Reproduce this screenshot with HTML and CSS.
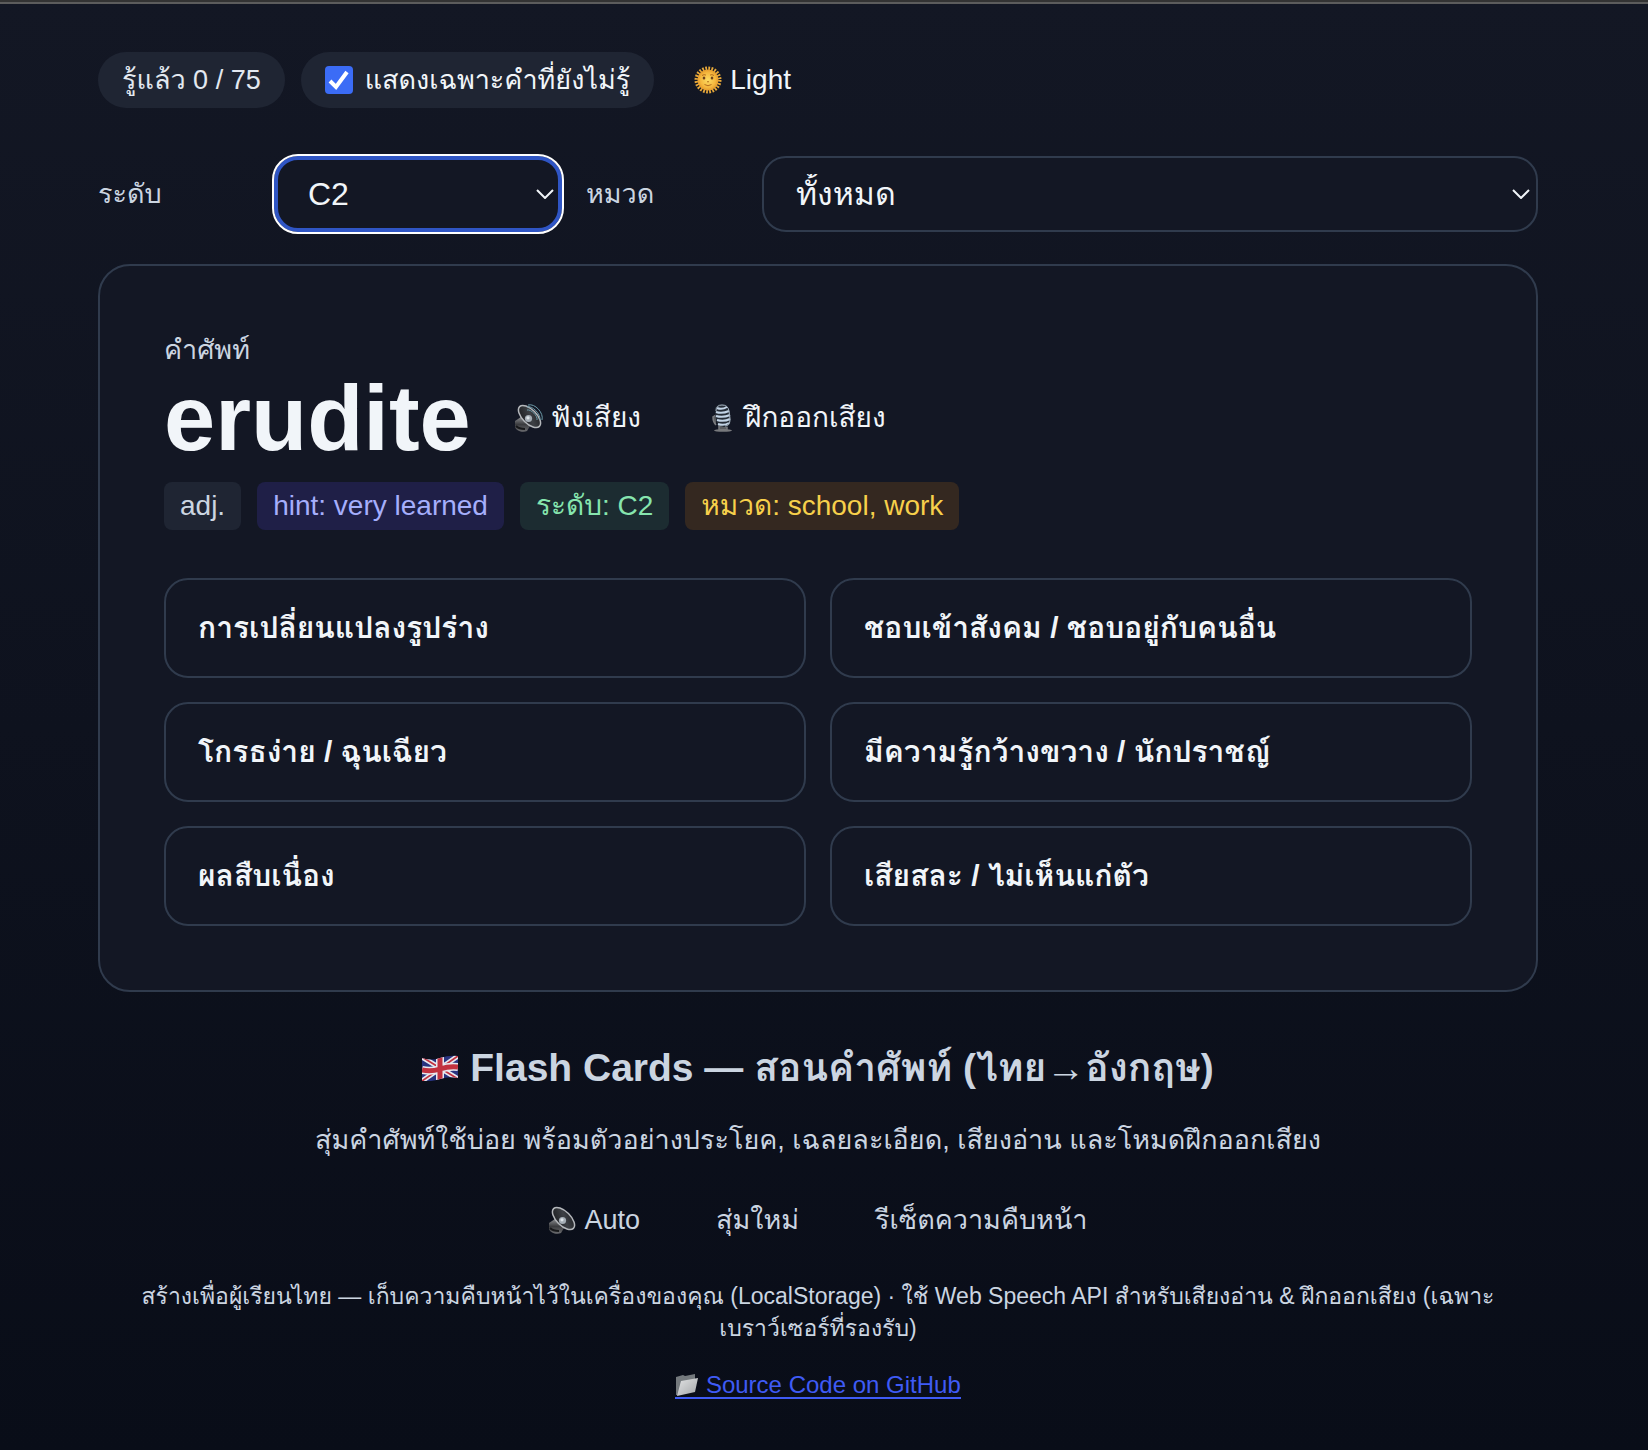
FILE: index.html
```
<!DOCTYPE html>
<html lang="th">
<head>
<meta charset="utf-8">
<meta name="viewport" content="width=device-width, initial-scale=1">
<title>Flash Cards</title>
<link rel="stylesheet" href="styles.css">
</head>
<body>
<svg class="defs" width="0" height="0" aria-hidden="true">
  <defs>
    <linearGradient id="cone" x1="0" y1="0" x2="1" y2="1"><stop offset="0" stop-color="#17181b"/><stop offset=".55" stop-color="#3d4045"/><stop offset="1" stop-color="#1d1e21"/></linearGradient>
    <linearGradient id="body" x1="0" y1="0" x2="0" y2="1"><stop offset="0" stop-color="#8b8d90"/><stop offset=".5" stop-color="#3a3b3e"/><stop offset="1" stop-color="#6c6d70"/></linearGradient>
    <radialGradient id="sun"><stop offset="0" stop-color="#fcdc63"/><stop offset=".7" stop-color="#f5b83e"/><stop offset="1" stop-color="#e59a2c"/></radialGradient>
    <linearGradient id="folder" x1="0" y1="0" x2="1" y2="1"><stop offset="0" stop-color="#e2e3e4"/><stop offset="1" stop-color="#a3a6a9"/></linearGradient>
    <symbol id="speaker" viewBox="0 0 28 28">
      <path d="M0 17l6-4 9 9-3 5c-4 2-11 0-12-4z" fill="url(#body)"/>
      <path d="M1 22c2 2 5 3 9 3" stroke="#17181a" stroke-width="2" fill="none"/>
      <ellipse cx="14.500" cy="12.500" rx="7" ry="14" transform="rotate(-45 14.500 12.500)" fill="url(#cone)" stroke="#b4b7bb" stroke-width="1.500"/>
      <circle cx="13.500" cy="14.500" r="3.600" fill="#a4adb5"/><circle cx="13" cy="13.800" r="1.600" fill="#dce3e8"/>
    </symbol>
    <symbol id="waves" viewBox="0 0 28 28">
      <g fill="none" stroke="#6c9aa8" stroke-width="1"><path d="M12 6c4-1 11 6 10 10"/><path d="M12 3c5-2 14 7 13 13"/><path d="M13 1c7-2 16 8 14 15"/></g>
    </symbol>
  </defs>
</svg>
<main class="page">
  <div class="toolbar">
    <span class="pill">รู้แล้ว 0 / 75</span>
    <label class="pill pill-check"><input type="checkbox" class="check" checked><span>แสดงเฉพาะคำที่ยังไม่รู้</span></label>
    <button type="button" class="ghost">
      <svg class="icon" viewBox="0 0 28 28" aria-hidden="true">
        <circle cx="14" cy="14" r="11.500" fill="none" stroke="#e8a93a" stroke-width="4" stroke-dasharray="1.700 1.310"/>
        <circle cx="14" cy="14" r="10.500" fill="url(#sun)"/>
        <g fill="#6d421b"><ellipse cx="10" cy="12" rx="1.300" ry="1.600"/><ellipse cx="18" cy="12" rx="1.300" ry="1.600"/></g>
        <path d="M8 9.500q2-1.500 4-.4M16 9.100q2-1.100 4 .4M13 15.500q1 1 2 0M10.500 18.500q3.500 2.500 7 0" fill="none" stroke="#b56d1e" stroke-width="1"/>
      </svg>
      <span>Light</span>
    </button>
  </div>

  <div class="filters">
    <label for="level">ระดับ</label>
    <div class="select-wrap">
      <select id="level" class="select select-active"><option>C2</option></select>
      <svg class="chevron" viewBox="0 0 18 10" aria-hidden="true"><path d="M1 1l8 8 8-8"/></svg>
    </div>
    <label for="category">หมวด</label>
    <div class="select-wrap">
      <select id="category" class="select"><option>ทั้งหมด</option></select>
      <svg class="chevron" viewBox="0 0 18 10" aria-hidden="true"><path d="M1 1l8 8 8-8"/></svg>
    </div>
  </div>

  <section class="card">
    <div class="card-label">คำศัพท์</div>
    <div class="word-row">
      <h1 class="word">erudite</h1>
      <button type="button" class="ghost">
        <svg class="icon" viewBox="0 0 28 28" aria-hidden="true"><use href="#speaker"/><use href="#waves"/></svg>
        <span>ฟังเสียง</span>
      </button>
      <button type="button" class="ghost">
        <svg class="icon" viewBox="-2 0 28 28" aria-hidden="true">
          <path d="M5 21q-3-3-3-8l3-2M8 21l8 2v3H8z" fill="#5b5d61" stroke="#797b7f" stroke-width="1.500"/>
          <ellipse cx="12" cy="26.400" rx="9" ry="1.400" fill="#77797c"/>
          <path d="M4 8C3 3 6 0 11 0s7 3 8 8l1 7c0 5-2 8-6 8s-8-2-9-7z" fill="#252c36"/>
          <path d="M5 8q6 2 13-1M5 12q7 2 14-1M6 16q7 2 13-1M7 20q6 2 11-1M6 4q5 2 10-1" fill="none" stroke="#c3d4e6" stroke-width="2"/>
          <path d="M5 7q0-6 6-6t7 6l1 8q0 7-5 7" fill="none" stroke="#a4b1c0" stroke-width="1"/>
        </svg>
        <span>ฝึกออกเสียง</span>
      </button>
    </div>
    <div class="tags">
      <span class="tag">adj.</span>
      <span class="tag tag-hint">hint: very learned</span>
      <span class="tag tag-level">ระดับ: C2</span>
      <span class="tag tag-category">หมวด: school, work</span>
    </div>
    <div class="choices">
      <button type="button" class="choice">การเปลี่ยนแปลงรูปร่าง</button>
      <button type="button" class="choice">ชอบเข้าสังคม / ชอบอยู่กับคนอื่น</button>
      <button type="button" class="choice">โกรธง่าย / ฉุนเฉียว</button>
      <button type="button" class="choice">มีความรู้กว้างขวาง / นักปราชญ์</button>
      <button type="button" class="choice">ผลสืบเนื่อง</button>
      <button type="button" class="choice">เสียสละ / ไม่เห็นแก่ตัว</button>
    </div>
  </section>

  <footer class="footer">
    <h2 class="title">
      <svg class="flag" viewBox="0 0 36 26" aria-hidden="true">
        <clipPath id="wave"><path d="M0 3Q9 6 18 3T36 1V23Q27 21 18 24T0 26z"/></clipPath>
        <g clip-path="url(#wave)">
          <path d="M0 0h36v26H0z" fill="#28337f"/>
          <path d="M0 2l36 22M0 26L36 1" stroke="#e6e8ef" stroke-width="5"/>
          <path d="M0 2l36 22M0 26L36 1" stroke="#c2313f" stroke-width="1.800"/>
          <path d="M18 0v26M0 15Q9 17 18 14T36 12" fill="none" stroke="#e6e8ef" stroke-width="8"/>
          <path d="M18 0v26M0 15Q9 17 18 14T36 12" fill="none" stroke="#c2313f" stroke-width="5"/>
        </g>
      </svg>
      <span>Flash Cards — สอนคำศัพท์ (ไทย→อังกฤษ)</span>
    </h2>
    <p class="subtitle">สุ่มคำศัพท์ใช้บ่อย พร้อมตัวอย่างประโยค, เฉลยละเอียด, เสียงอ่าน และโหมดฝึกออกเสียง</p>
    <div class="actions">
      <button type="button" class="ghost">
        <svg class="icon" viewBox="0 0 28 28" aria-hidden="true"><use href="#speaker"/></svg>
        <span>Auto</span>
      </button>
      <button type="button" class="ghost">สุ่มใหม่</button>
      <button type="button" class="ghost">รีเซ็ตความคืบหน้า</button>
    </div>
    <p class="note">สร้างเพื่อผู้เรียนไทย — เก็บความคืบหน้าไว้ในเครื่องของคุณ (LocalStorage) · ใช้ Web Speech API สำหรับเสียงอ่าน &amp; ฝึกออกเสียง (เฉพาะเบราว์เซอร์ที่รองรับ)</p>
    <a class="source" href="#source"><svg class="icon-small" viewBox="0 0 24 24" aria-hidden="true"><path d="M1 4l7-2 2 1 10-2v6L3 22H1z" fill="#74797d"/><path d="M6 8l17-3-3 14L2 23z" fill="url(#folder)"/></svg> Source Code on GitHub</a>
  </footer>
</main>
</body>
</html>
```
FILE: styles.css
```
* { box-sizing: border-box; }

body {
  margin: 0;
  min-height: 100vh;
  border-top: 2px solid #333333;
  background: linear-gradient(#131724, #090d18);
  color: #f1f5f9;
  font-family: "Liberation Sans", Loma, Garuda, Waree, "Noto Sans Thai Looped", "Noto Sans Thai", sans-serif;
  font-size: 28px;
  line-height: 40px;
}

.defs { display: block; height: 0; }

.page {
  border-top: 2px solid #5c5c5c;
  padding: 48px 108px 48px 96px;
}

.page > * { max-width: 1440px; margin-left: auto; margin-right: auto; }

button, select, input { font: inherit; color: inherit; margin: 0; }

.toolbar { display: flex; align-items: center; gap: 16px; }

.pill {
  padding: 8px 24px;
  border-radius: 28px;
  background: #1f2533;
  color: #e2e8f0;
  white-space: nowrap;
}

.pill-check { display: flex; align-items: center; gap: 12px; color: #f1f5f9; }

.check {
  appearance: none;
  width: 28px;
  height: 28px;
  border-radius: 4px;
  background: #3b6cf6 url("data:image/svg+xml,%3Csvg xmlns='http://www.w3.org/2000/svg' viewBox='0 0 28 28'%3E%3Cpath d='M5 15l6 6L22 6' fill='none' stroke='white' stroke-width='4'/%3E%3C/svg%3E");
}

.ghost {
  display: flex;
  align-items: center;
  gap: 8px;
  padding: 8px 24px;
  border: 0;
  background: none;
  white-space: nowrap;
}

.icon { width: 28px; height: 28px; flex: none; }

.filters {
  display: grid;
  grid-template-columns: 152px 288px 152px 1fr;
  align-items: center;
  gap: 24px;
  margin-top: 48px;
  color: #cbd5e1;
}

.pill, .filters, .card-label, .subtitle, .actions { font-size: 27px; }

.select-wrap { position: relative; }

.select {
  appearance: none;
  display: block;
  width: 100%;
  height: 76px;
  padding: 0 32px;
  border: 2px solid #303b4d;
  border-radius: 24px;
  background: #131724;
  color: #f1f5f9;
  font-size: 32px;
}

.select-active { border: 4px solid #2f55c4; outline: 2px solid #ffffff; padding: 0 30px; }

.chevron {
  position: absolute;
  right: 8px;
  top: 33px;
  width: 18px;
  height: 10px;
  fill: none;
  stroke: #f1f5f9;
  stroke-width: 2;
  pointer-events: none;
}

.card {
  margin-top: 32px;
  padding: 64px;
  border: 2px solid #303b4d;
  border-radius: 32px;
  background: #131724;
}

.card-label { color: #cbd5e1; }

.word-row { display: flex; align-items: center; gap: 20px; }

.word { margin: 0; font-size: 92px; line-height: 96px; }

.tags { display: flex; flex-wrap: wrap; gap: 16px; margin-top: 16px; }

.tag { padding: 4px 16px; border-radius: 8px; background: #1f2533; color: #cbd5e1; }
.tag-hint { background: #1f1f47; color: #a5aefc; }
.tag-level { background: #1c2c31; color: #86e5ae; }
.tag-category { background: #342820; color: #f7d04b; }

.choices { display: grid; grid-template-columns: 1fr 1fr; gap: 24px; margin-top: 48px; }

.choice {
  min-height: 100px;
  padding: 24px 32px;
  border: 2px solid #303b4d;
  border-radius: 24px;
  background: none;
  font-size: 30px;
  font-weight: 600;
  line-height: 48px;
  text-align: left;
}

.footer { margin-top: 48px; color: #cbd5e1; text-align: center; }

.title {
  display: flex;
  align-items: center;
  justify-content: center;
  gap: 12px;
  margin: 0;
  font-size: 39px;
  line-height: 56px;
}

.flag { width: 36px; height: 26px; }

.subtitle { margin: 24px 0 32px; }

.actions { display: flex; justify-content: center; gap: 28px; }

.note { margin: 32px 0 20px; padding: 0 32px; font-size: 23px; line-height: 32px; }

.source {
  display: inline-block;
  border-bottom: 2px solid #3f5bf5;
  color: #3f5bf5;
  font-size: 24px;
  line-height: 24px;
  text-decoration: none;
}

.icon-small { width: 24px; height: 24px; vertical-align: -4px; }
```
